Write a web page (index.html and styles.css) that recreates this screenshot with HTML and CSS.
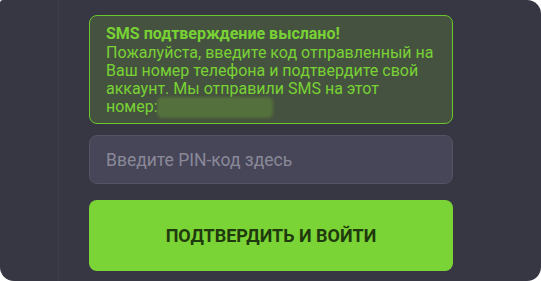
FILE: index.html
```html
<!DOCTYPE html>
<html lang="ru">
<head>
<meta charset="utf-8">
<link rel="stylesheet" href="styles.css">
</head>
<body>
<div class="card">
  <div class="sidebar"></div>
  <div class="main">
    <div class="alert">
      <div class="alert-title">SMS подтверждение выслано!</div>
      <div class="alert-body">Пожалуйста, введите код отправленный на Ваш номер телефона и подтвердите свой аккаунт. Мы отправили SMS на этот <span class="nowrap">номер:<span class="redacted"></span></span></div>
    </div>
    <input class="pin" type="text" placeholder="Введите PIN-код здесь">
    <button class="submit">ПОДТВЕРДИТЬ И ВОЙТИ</button>
  </div>
</div>
</body>
</html>
```

FILE: styles.css
```css
html, body {
  margin: 0;
  padding: 0;
  background: #ffffff;
}
body {
  font-family: Roboto, "Liberation Sans", sans-serif;
}
.card {
  width: 541px;
  height: 281px;
  background: #373743;
  border-radius: 3px 14px 14px 14px;
  display: flex;
  overflow: hidden;
}
.sidebar {
  width: 58px;
  flex: none;
  border-right: 1px solid #3e3e4b;
}
.main {
  width: 364px;
  padding: 15px 0 0 30px;
  display: flex;
  flex-direction: column;
}
.alert {
  box-sizing: border-box;
  height: 109px;
  border: 1px solid #6cc72c;
  border-radius: 8px;
  background: #465240;
  padding: 8px 12px 7px 16px;
  color: #78d234;
  font-size: 16px;
}
.alert-title {
  font-weight: 700;
  line-height: 20px;
}
.alert-body {
  line-height: 18px;
}
.nowrap {
  white-space: nowrap;
}
.redacted {
  display: inline-block;
  width: 112px;
  height: 17px;
  vertical-align: -4px;
  background: #54703c;
  border-radius: 3px;
  box-shadow: 0 0 3px 2px #54703c;
  margin-left: 1px;
}
.pin {
  box-sizing: border-box;
  margin-top: 11px;
  height: 49px;
  width: 100%;
  border: 1px solid #535366;
  border-radius: 8px;
  background: #474659;
  padding: 0 16px;
  font-family: Roboto, "Liberation Sans", sans-serif;
  font-size: 17.5px;
  color: #d0d0d8;
  outline: none;
}
.pin::placeholder {
  color: #8a8998;
}
.submit {
  margin-top: 16px;
  height: 71px;
  width: 100%;
  border: none;
  border-radius: 8px;
  background: #7bd436;
  color: #1f3a0c;
  font-family: Roboto, "Liberation Sans", sans-serif;
  font-size: 18px;
  font-weight: 700;
  padding: 0;
}
```
